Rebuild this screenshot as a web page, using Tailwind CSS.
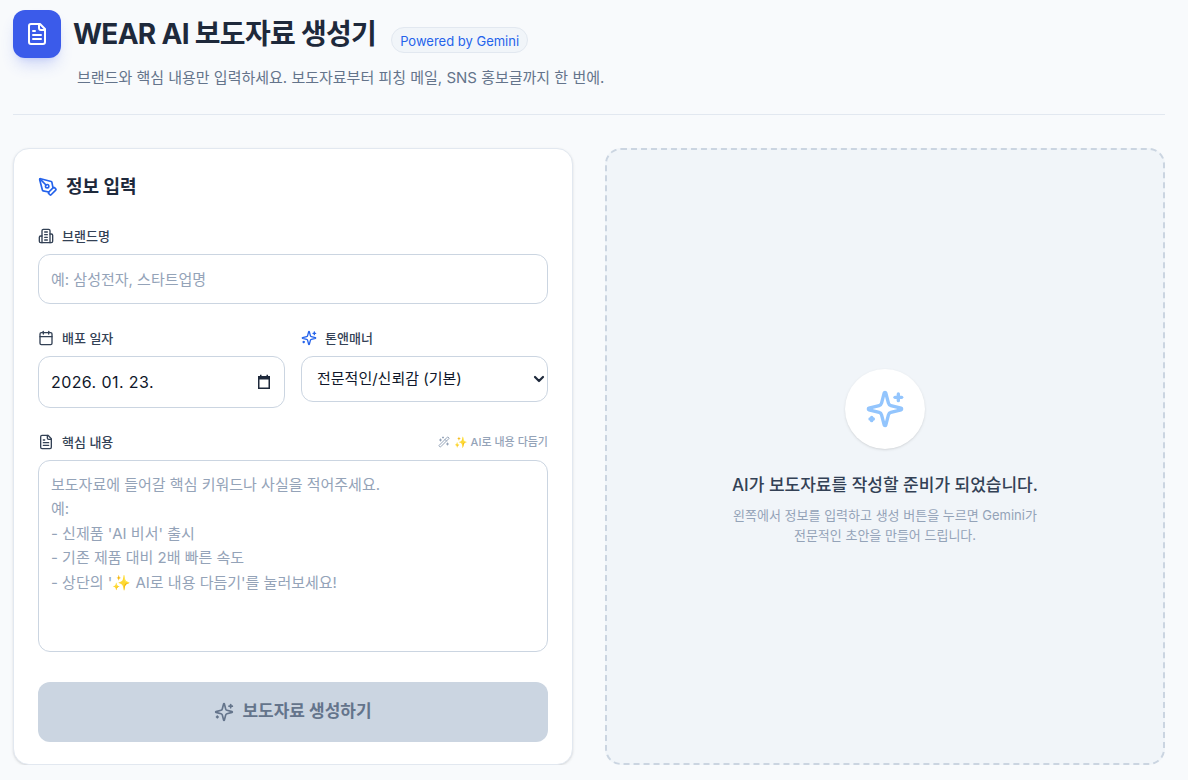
<!DOCTYPE html>
<html lang="ko">
<head>
<meta charset="utf-8">
<title>WEAR AI 보도자료 생성기</title>
<script src="https://cdn.jsdelivr.net/npm/@tailwindcss/browser@4"></script>
</head>
<body class="bg-[#f8fafc] text-[#0f172a] font-['Inter','Noto_Sans_CJK_KR',sans-serif] overflow-hidden">
<div class="w-[1152px] ml-[13px] pt-[10px]">
  <header class="h-[105px] border-b border-[#e2e8f0]">
    <div class="flex items-center gap-3">
      <div class="w-12 h-12 rounded-xl bg-[#3b5bea] shadow-lg shadow-[#3b5bea]/20 flex items-center justify-center text-white">
        <svg class="w-6 h-6" viewBox="0 0 24 24" fill="none" stroke="currentColor" stroke-width="2" stroke-linecap="round" stroke-linejoin="round"><path d="M15 2H6a2 2 0 0 0-2 2v16a2 2 0 0 0 2 2h12a2 2 0 0 0 2-2V7Z"/><path d="M14 2v4a2 2 0 0 0 2 2h4"/><path d="M10 9H8"/><path d="M16 13H8"/><path d="M16 17H8"/></svg>
      </div>
      <h1 class="text-[28px] leading-[48px] font-bold text-[#1e293b] tracking-tight">WEAR AI 보도자료 생성기</h1>
      <span class="ml-[3px] mt-[12px] h-[26px] px-2 rounded-full border border-[#e2e8f0] bg-[#f1f5f9] text-[#2563eb] text-[13px] leading-[26px]">Powered by Gemini</span>
    </div>
    <p class="ml-16 mt-[10px] text-[15px] leading-5 text-[#64748b]">브랜드와 핵심 내용만 입력하세요. 보도자료부터 피칭 메일, SNS 홍보글까지 한 번에.</p>
  </header>

  <main class="grid grid-cols-2 gap-8 mt-[33px]">
    <section class="h-[617px] bg-white rounded-2xl border border-[#e2e8f0] shadow-sm px-6 pt-6">
      <h2 class="flex items-center gap-2 text-lg leading-7 font-bold text-[#1e293b]">
        <svg class="w-5 h-5 text-[#2563eb]" viewBox="0 0 24 24" fill="none" stroke="currentColor" stroke-width="2" stroke-linecap="round" stroke-linejoin="round"><path d="M15.707 21.293a1 1 0 0 1-1.414 0l-1.586-1.586a1 1 0 0 1 0-1.414l5.586-5.586a1 1 0 0 1 1.414 0l1.586 1.586a1 1 0 0 1 0 1.414z"/><path d="m18 13-1.375-6.874a1 1 0 0 0-.746-.776L3.235 2.028a1 1 0 0 0-1.207 1.207L5.35 15.879a1 1 0 0 0 .776.746L13 18"/><path d="m2.3 2.3 7.286 7.286"/><circle cx="11" cy="11" r="2"/></svg>
        정보 입력
      </h2>

      <label class="mt-[25px] flex items-center gap-2 text-[13px] leading-5 font-medium text-[#334155]">
        <svg class="w-4 h-4" viewBox="0 0 24 24" fill="none" stroke="currentColor" stroke-width="2" stroke-linecap="round" stroke-linejoin="round"><path d="M6 22V4a2 2 0 0 1 2-2h8a2 2 0 0 1 2 2v18Z"/><path d="M6 12H4a2 2 0 0 0-2 2v6a2 2 0 0 0 2 2h2"/><path d="M18 9h2a2 2 0 0 1 2 2v9a2 2 0 0 1-2 2h-2"/><path d="M10 6h4"/><path d="M10 10h4"/><path d="M10 14h4"/><path d="M10 18h4"/></svg>
        브랜드명
      </label>
      <input type="text" placeholder="예: 삼성전자, 스타트업명" class="mt-2 block w-full h-[50px] px-3 rounded-xl border border-[#cbd5e1] bg-white text-[15px] placeholder:text-[#94a3b8]">

      <div class="grid grid-cols-2 gap-4 mt-6">
        <div>
          <label class="flex items-center gap-2 text-[13px] leading-5 font-medium text-[#334155]">
            <svg class="w-4 h-4" viewBox="0 0 24 24" fill="none" stroke="currentColor" stroke-width="2" stroke-linecap="round" stroke-linejoin="round"><path d="M8 2v4"/><path d="M16 2v4"/><rect width="18" height="18" x="3" y="4" rx="2"/><path d="M3 10h18"/></svg>
            배포 일자
          </label>
          <div class="relative mt-2 h-[52px] px-3 rounded-xl border border-[#cbd5e1] bg-white flex items-center justify-between text-base text-[#0f172a]">
            <span class="tracking-[0.4px]">2026. 01. 23.</span>
            <svg class="w-4 h-4" viewBox="0 0 16 16" fill="#1e293b"><path d="M2 2h2V.8h1.5V2h5V.8H12V2h2v13H2zM3.5 5.5v8h9v-8z"/></svg>
          </div>
        </div>
        <div>
          <label class="flex items-center gap-2 text-[13px] leading-5 font-medium text-[#334155]">
            <svg class="w-4 h-4 text-[#2563eb]" viewBox="0 0 24 24" fill="none" stroke="currentColor" stroke-width="2" stroke-linecap="round" stroke-linejoin="round"><path d="M9.937 15.5A2 2 0 0 0 8.5 14.063l-6.135-1.582a.5.5 0 0 1 0-.962L8.5 9.936A2 2 0 0 0 9.937 8.5l1.582-6.135a.5.5 0 0 1 .963 0L14.063 8.5A2 2 0 0 0 15.5 9.937l6.135 1.581a.5.5 0 0 1 0 .964L15.5 14.063a2 2 0 0 0-1.437 1.437l-1.582 6.135a.5.5 0 0 1-.963 0z"/><path d="M20 3v4"/><path d="M22 5h-4"/><path d="M4 17v2"/><path d="M5 18H3"/></svg>
            톤앤매너
          </label>
          <div class="relative mt-2 h-[46px]">
            <select class="appearance-none block w-full h-full pl-[15px] pr-8 rounded-xl border border-[#cbd5e1] bg-white text-[15px] text-[#0f172a]">
              <option>전문적인/신뢰감 (기본)</option>
            </select>
            <svg class="absolute right-[3px] top-[17px] w-3 h-3 pointer-events-none" viewBox="0 0 12 12" fill="none" stroke="#1e293b" stroke-width="2.2" stroke-linecap="round" stroke-linejoin="round"><path d="M2 4l4 4 4-4"/></svg>
          </div>
        </div>
      </div>

      <div class="mt-6 flex items-center justify-between">
        <label class="flex items-center gap-2 text-[13px] leading-5 font-medium text-[#334155]">
          <svg class="w-4 h-4" viewBox="0 0 24 24" fill="none" stroke="currentColor" stroke-width="2" stroke-linecap="round" stroke-linejoin="round"><path d="M15 2H6a2 2 0 0 0-2 2v16a2 2 0 0 0 2 2h12a2 2 0 0 0 2-2V7Z"/><path d="M14 2v4a2 2 0 0 0 2 2h4"/><path d="M10 9H8"/><path d="M16 13H8"/><path d="M16 17H8"/></svg>
          핵심 내용
        </label>
        <button class="flex items-center gap-1 text-[11px] leading-4 font-medium text-[#94a3b8]">
          <svg class="w-3 h-3" viewBox="0 0 24 24" fill="none" stroke="currentColor" stroke-width="2" stroke-linecap="round" stroke-linejoin="round"><path d="m21.64 3.64-1.28-1.28a1.21 1.21 0 0 0-1.72 0L2.36 18.64a1.21 1.21 0 0 0 0 1.72l1.28 1.28a1.2 1.2 0 0 0 1.72 0L21.64 5.36a1.2 1.2 0 0 0 0-1.72"/><path d="m14 7 3 3"/><path d="M5 6v4"/><path d="M19 14v4"/><path d="M10 2v2"/><path d="M7 8H3"/><path d="M21 16h-4"/><path d="M11 3H9"/></svg>
          ✨ AI로 내용 다듬기
        </button>
      </div>
      <textarea class="mt-2 block w-full h-[192px] px-3 py-3 rounded-xl border border-[#cbd5e1] bg-white text-[15px] leading-[24.4px] resize-none placeholder:text-[#94a3b8]" placeholder="보도자료에 들어갈 핵심 키워드나 사실을 적어주세요.
예:
- 신제품 'AI 비서' 출시
- 기존 제품 대비 2배 빠른 속도
- 상단의 '✨ AI로 내용 다듬기'를 눌러보세요!"></textarea>

      <button disabled class="mt-[30px] w-full h-[60px] rounded-xl bg-[#cbd5e1] text-[#64748b] text-[17px] font-bold flex items-center justify-center gap-2">
        <svg class="w-5 h-5" viewBox="0 0 24 24" fill="none" stroke="currentColor" stroke-width="2" stroke-linecap="round" stroke-linejoin="round"><path d="M9.937 15.5A2 2 0 0 0 8.5 14.063l-6.135-1.582a.5.5 0 0 1 0-.962L8.5 9.936A2 2 0 0 0 9.937 8.5l1.582-6.135a.5.5 0 0 1 .963 0L14.063 8.5A2 2 0 0 0 15.5 9.937l6.135 1.581a.5.5 0 0 1 0 .964L15.5 14.063a2 2 0 0 0-1.437 1.437l-1.582 6.135a.5.5 0 0 1-.963 0z"/><path d="M20 3v4"/><path d="M22 5h-4"/><path d="M4 17v2"/><path d="M5 18H3"/></svg>
        보도자료 생성하기
      </button>
    </section>

    <section class="h-[617px] rounded-2xl border-2 border-dashed border-[#cbd5e1] bg-[#f1f5f9] flex flex-col items-center justify-center text-center">
      <div class="w-20 h-20 rounded-full bg-white shadow-sm flex items-center justify-center text-[#93c5fd]">
        <svg class="w-10 h-10" viewBox="0 0 24 24" fill="none" stroke="currentColor" stroke-width="2" stroke-linecap="round" stroke-linejoin="round"><path d="M9.937 15.5A2 2 0 0 0 8.5 14.063l-6.135-1.582a.5.5 0 0 1 0-.962L8.5 9.936A2 2 0 0 0 9.937 8.5l1.582-6.135a.5.5 0 0 1 .963 0L14.063 8.5A2 2 0 0 0 15.5 9.937l6.135 1.581a.5.5 0 0 1 0 .964L15.5 14.063a2 2 0 0 0-1.437 1.437l-1.582 6.135a.5.5 0 0 1-.963 0z"/><path d="M20 3v4"/><path d="M22 5h-4"/><path d="M4 17v2"/><path d="M5 18H3"/></svg>
      </div>
      <p class="mt-6 text-[17px] leading-6 font-medium text-[#334155]">AI가 보도자료를 작성할 준비가 되었습니다.</p>
      <p class="mt-2 text-[13px] leading-5 text-[#94a3b8]">왼쪽에서 정보를 입력하고 생성 버튼을 누르면 Gemini가<br>전문적인 초안을 만들어 드립니다.</p>
    </section>
  </main>
</div>
</body>
</html>
